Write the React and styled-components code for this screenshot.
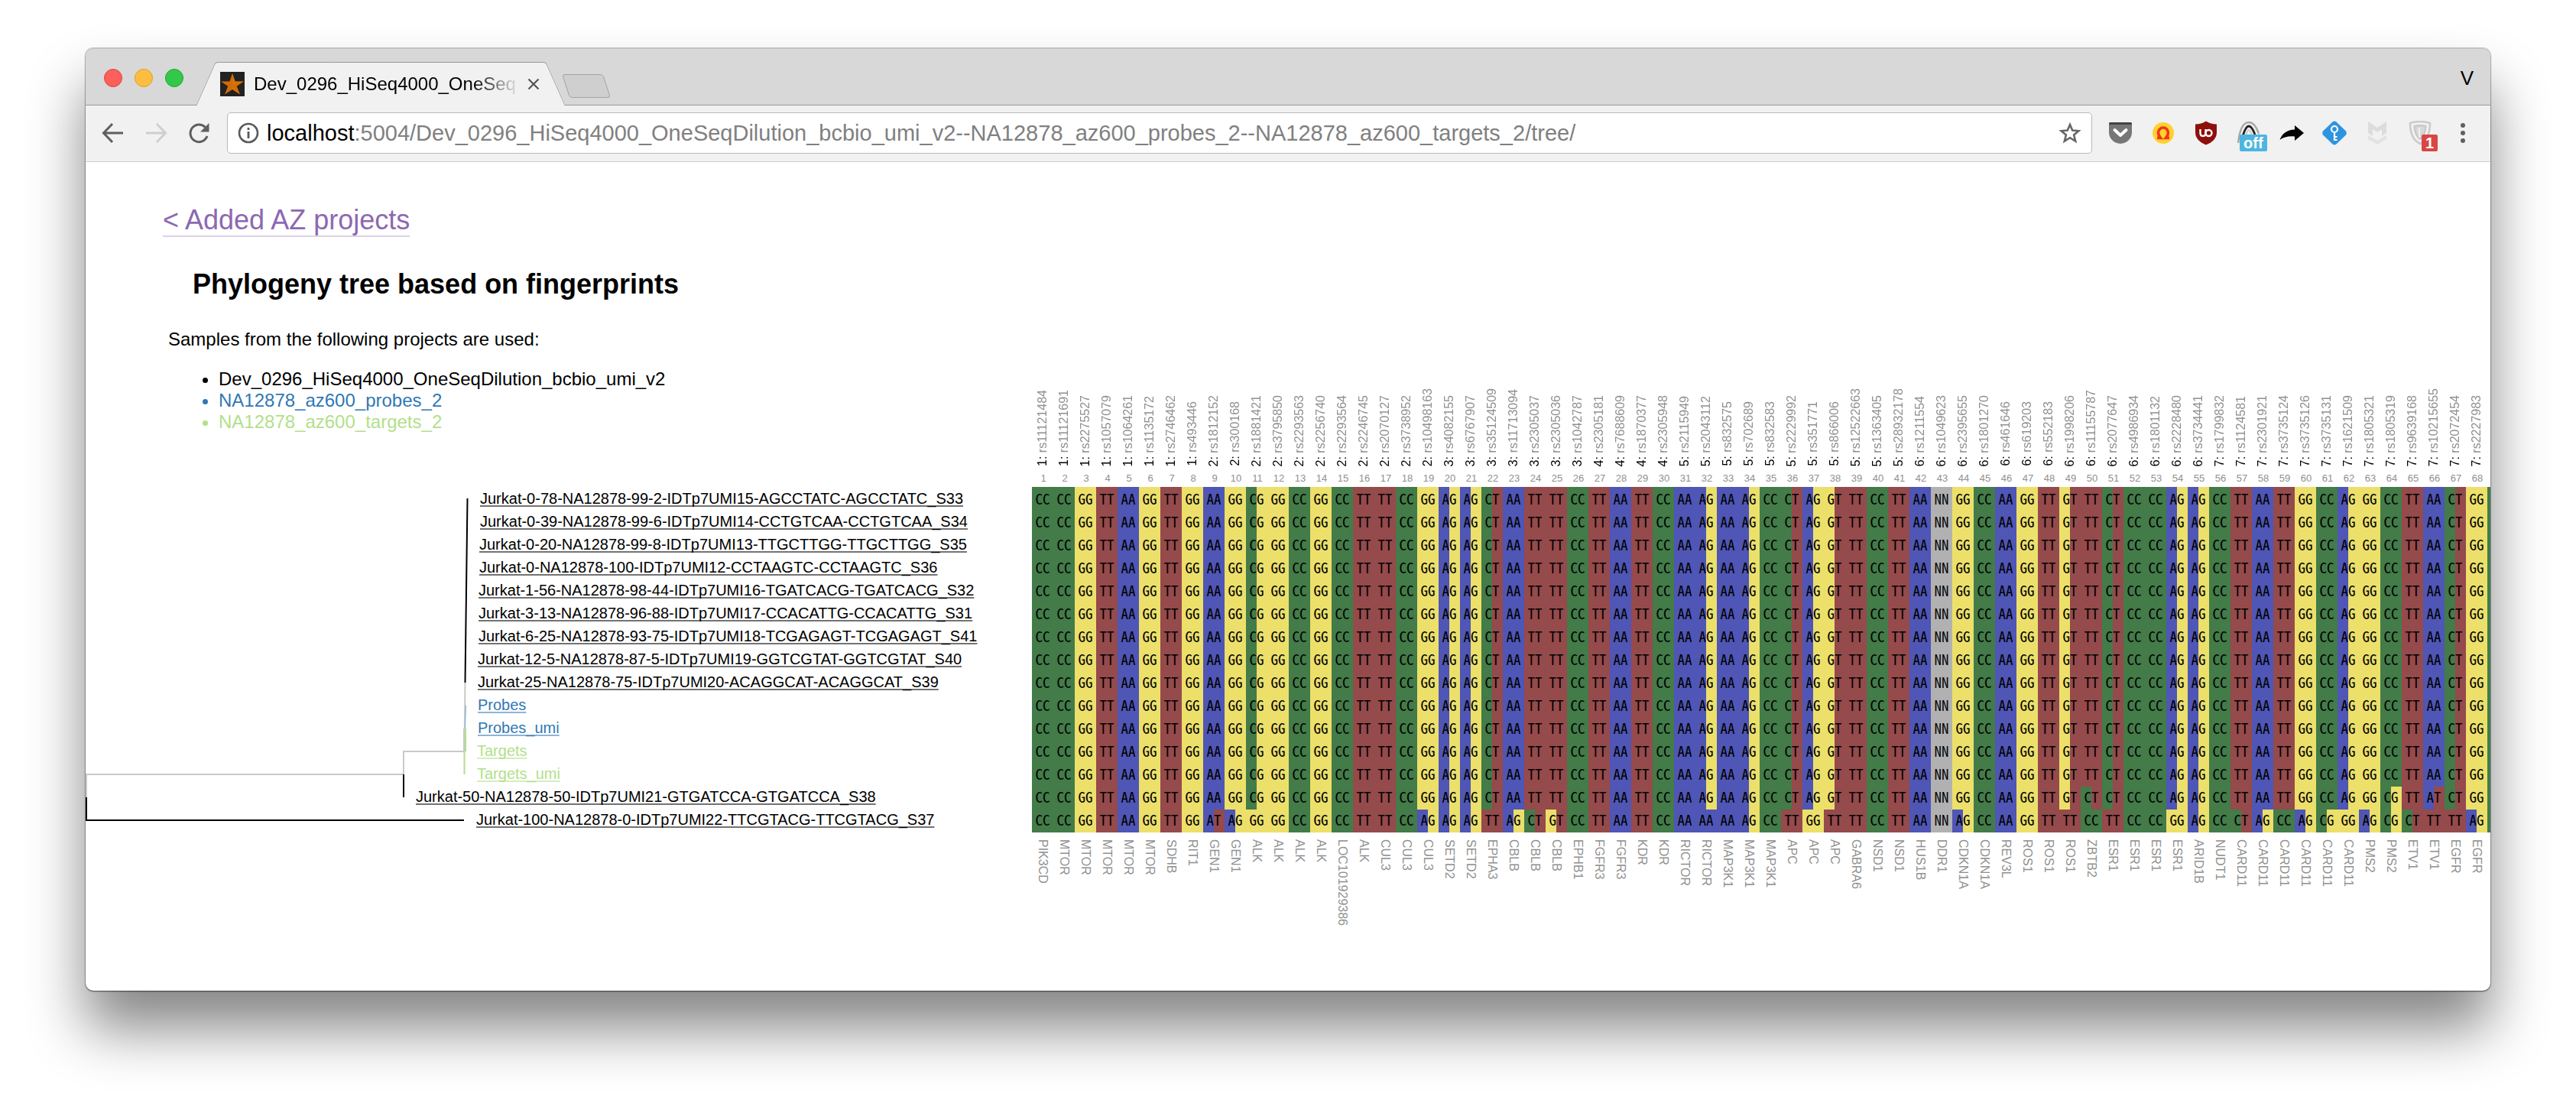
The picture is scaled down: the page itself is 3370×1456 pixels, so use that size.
import React from "react";
import styled, { createGlobalStyle, css } from "styled-components";

const BASE_COLORS = {
  A: "#4f56b5",
  C: "#437b49",
  G: "#ece06b",
  T: "#954a4c",
  N: "#b1b1b1",
};

const PROJECT_COLORS = {
  main: "#000000",
  probes: "#3078b4",
  targets: "#b2df8a",
};

const LOCI = [
  [1, "rs11121484", "PIK3CD"], [1, "rs11121691", "MTOR"], [1, "rs2275527", "MTOR"],
  [1, "rs1057079", "MTOR"], [1, "rs1064261", "MTOR"], [1, "rs1135172", "MTOR"],
  [1, "rs2746462", "SDHB"], [1, "rs493446", "RIT1"], [2, "rs1812152", "GEN1"],
  [2, "rs300168", "GEN1"], [2, "rs1881421", "ALK"], [2, "rs3795850", "ALK"],
  [2, "rs2293563", "ALK"], [2, "rs2256740", "ALK"], [2, "rs2293564", "LOC101929386"],
  [2, "rs2246745", "ALK"], [2, "rs2070127", "CUL3"], [2, "rs3738952", "CUL3"],
  [2, "rs10498163", "CUL3"], [3, "rs4082155", "SETD2"], [3, "rs6767907", "SETD2"],
  [3, "rs35124509", "EPHA3"], [3, "rs11713094", "CBLB"], [3, "rs2305037", "CBLB"],
  [3, "rs2305036", "CBLB"], [3, "rs1042787", "EPHB1"], [4, "rs2305181", "FGFR3"],
  [4, "rs7688609", "FGFR3"], [4, "rs1870377", "KDR"], [4, "rs2305948", "KDR"],
  [5, "rs2115949", "RICTOR"], [5, "rs2043112", "RICTOR"], [5, "rs832575", "MAP3K1"],
  [5, "rs702689", "MAP3K1"], [5, "rs832583", "MAP3K1"], [5, "rs2229992", "APC"],
  [5, "rs351771", "APC"], [5, "rs866006", "APC"], [5, "rs12522663", "GABRA6"],
  [5, "rs1363405", "NSD1"], [5, "rs28932178", "NSD1"], [6, "rs1211554", "HUS1B"],
  [6, "rs1049623", "DDR1"], [6, "rs2395655", "CDKN1A"], [6, "rs1801270", "CDKN1A"],
  [6, "rs461646", "REV3L"], [6, "rs619203", "ROS1"], [6, "rs552183", "ROS1"],
  [6, "rs1998206", "ROS1"], [6, "rs11155787", "ZBTB2"], [6, "rs2077647", "ESR1"],
  [6, "rs4986934", "ESR1"], [6, "rs1801132", "ESR1"], [6, "rs2228480", "ESR1"],
  [6, "rs3734441", "ARID1B"], [7, "rs1799832", "NUDT1"], [7, "rs1124581", "CARD11"],
  [7, "rs2301921", "CARD11"], [7, "rs3735124", "CARD11"], [7, "rs3735126", "CARD11"],
  [7, "rs3735131", "CARD11"], [7, "rs1621509", "CARD11"], [7, "rs1805321", "PMS2"],
  [7, "rs1805319", "PMS2"], [7, "rs9639168", "ETV1"], [7, "rs10215655", "ETV1"],
  [7, "rs2072454", "EGFR"], [7, "rs2227983", "EGFR"],
];

const COMMON =
  "CC CC GG TT AA GG TT GG AA GG CG GG CC GG CC TT TT CC GG AG AG CT AA TT TT CC TT AA TT CC AA AG AA AG CC CT AG GT TT CC TT AA NN GG CC AA GG TT GT TT CT CC CC AG AG CC TT AA TT GG CC AG GG CC TT AA CT GG".split(" ");

const JURKAT_50 = COMMON.map((g, i) => ({ 49: "CT", 63: "CG", 65: "AT" })[i] || g);

const JURKAT_100 =
  "CC CC GG TT AA GG TT GG AT AG GG GG CC GG CC TT TT CC AG AG AG TT AG CT GT CC TT AA TT CC AA AA AA AG CC TT GG TT TT CC TT AA NN AG CC AA GG TT TT CC TT CC CC GG AG CC CT AG CC AG CG GG AG CG CT TT TT AG".split(" ");

const SAMPLES = [
  { name: "Jurkat-0-78-NA12878-99-2-IDTp7UMI15-AGCCTATC-AGCCTATC_S33", project: "main", depth: 500 },
  { name: "Jurkat-0-39-NA12878-99-6-IDTp7UMI14-CCTGTCAA-CCTGTCAA_S34", project: "main", depth: 500 },
  { name: "Jurkat-0-20-NA12878-99-8-IDTp7UMI13-TTGCTTGG-TTGCTTGG_S35", project: "main", depth: 499 },
  { name: "Jurkat-0-NA12878-100-IDTp7UMI12-CCTAAGTC-CCTAAGTC_S36", project: "main", depth: 499 },
  { name: "Jurkat-1-56-NA12878-98-44-IDTp7UMI16-TGATCACG-TGATCACG_S32", project: "main", depth: 498 },
  { name: "Jurkat-3-13-NA12878-96-88-IDTp7UMI17-CCACATTG-CCACATTG_S31", project: "main", depth: 498 },
  { name: "Jurkat-6-25-NA12878-93-75-IDTp7UMI18-TCGAGAGT-TCGAGAGT_S41", project: "main", depth: 498 },
  { name: "Jurkat-12-5-NA12878-87-5-IDTp7UMI19-GGTCGTAT-GGTCGTAT_S40", project: "main", depth: 497 },
  { name: "Jurkat-25-NA12878-75-IDTp7UMI20-ACAGGCAT-ACAGGCAT_S39", project: "main", depth: 497 },
  { name: "Probes", project: "probes", depth: 497 },
  { name: "Probes_umi", project: "probes", depth: 497 },
  { name: "Targets", project: "targets", depth: 496 },
  { name: "Targets_umi", project: "targets", depth: 496 },
  { name: "Jurkat-50-NA12878-50-IDTp7UMI21-GTGATCCA-GTGATCCA_S38", project: "main", depth: 416, genotypes: JURKAT_50 },
  { name: "Jurkat-100-NA12878-0-IDTp7UMI22-TTCGTACG-TTCGTACG_S37", project: "main", depth: 495, genotypes: JURKAT_100 },
];

const LABEL_GAP = 16;

const GlobalStyle = createGlobalStyle`
  *, *::before, *::after { box-sizing: border-box; }
  body {
    margin: 0;
    background: #fff;
    color: #000;
    font-family: "Liberation Sans", Arial, Helvetica, sans-serif;
  }
  button { font: inherit; color: inherit; }
`;

const Desktop = styled.div`
  padding: 63px 112px 160px;
`;

const Window = styled.div`
  border-radius: 10px;
  background: #fff;
  box-shadow: 0 0 0 1px rgba(0, 0, 0, 0.18), 0 1px 2px rgba(0, 0, 0, 0.5), 0 50px 74px rgba(0, 0, 0, 0.48);
`;

/* ---------- tab strip ---------- */

const TabStrip = styled.header`
  display: flex;
  align-items: flex-end;
  height: 75px;
  padding: 3px 20px 0 24px;
  background: #d8d8d8;
  border-top: 1px solid #c2c2c2;
  border-bottom: 1px solid #989898;
  border-radius: 10px 10px 0 0;
`;

const WindowControls = styled.div`
  display: flex;
  align-self: center;
  gap: 16px;
  margin-right: 16px;
`;

const ControlDot = styled.button`
  width: 24px;
  height: 24px;
  padding: 0;
  border: 1px solid ${(p) => p.$edge};
  border-radius: 50%;
  background: ${(p) => p.$fill};
`;

const tabSide = css`
  content: "";
  position: absolute;
  z-index: 0;
  top: 0;
  bottom: 0;
  background: #f1f1f1;
  border-top: 1px solid #989898;
`;

const Tab = styled.div`
  position: relative;
  display: flex;
  align-items: center;
  width: 484px;
  height: 57px;
  margin-bottom: -1px;
  padding: 0 33px 0 32px;

  &::before {
    ${tabSide}
    left: 13px;
    right: 50%;
    border-left: 1px solid #989898;
    border-top-left-radius: 4px;
    transform: skewX(-24deg);
  }
  &::after {
    ${tabSide}
    left: 40%;
    right: 13px;
    border-right: 1px solid #989898;
    border-top-right-radius: 4px;
    transform: skewX(24deg);
  }
  > * {
    position: relative;
    z-index: 1;
  }
`;

const TabTitle = styled.span`
  flex: 1;
  min-width: 0;
  margin: 0 9px 0 12px;
  overflow: hidden;
  white-space: nowrap;
  font-size: 24px;
  line-height: 28px;
  mask-image: linear-gradient(to right, #000 calc(100% - 60px), transparent);
`;

const TabClose = styled.button`
  display: flex;
  width: 18px;
  height: 18px;
  padding: 0;
  border: 0;
  background: none;
`;

const NewTab = styled.button`
  width: 54px;
  height: 31px;
  margin-bottom: 9px;
  border: 1px solid #a3a3a3;
  border-radius: 4px;
  background: #cfcfcf;
  transform: skewX(18deg);
`;

const ProfileButton = styled.button`
  align-self: center;
  margin-left: auto;
  padding: 0 2px;
  border: 0;
  background: none;
  font-size: 26px;
  line-height: 28px;
`;

/* ---------- toolbar ---------- */

const Toolbar = styled.nav`
  display: flex;
  align-items: center;
  gap: 21px;
  padding: 9px 20px 10px;
  background: #f1f1f1;
  border-bottom: 1px solid #cfcfcf;
`;

const ButtonGroup = styled.div`
  display: flex;
  gap: 24px;
`;

const IconButton = styled.button`
  position: relative;
  display: flex;
  width: 32px;
  height: 32px;
  padding: 0;
  border: 0;
  background: none;

  svg {
    display: block;
    width: 32px;
    height: 32px;
  }
`;

const Badge = styled.span`
  position: absolute;
  top: 18px;
  left: ${(p) => p.$left}px;
  padding: 0 5px;
  border-radius: 2px;
  background: ${(p) => p.$color};
  color: #fff;
  font-size: 20px;
  font-weight: 700;
  line-height: 22px;
`;

const AddressBar = styled.div`
  display: flex;
  flex: 1;
  align-items: center;
  height: 54px;
  padding: 0 12px 0 11px;
  border: 1px solid #b9b9b9;
  border-radius: 5px;
  background: #fff;
`;

const UrlLabel = styled.label`
  display: flex;
  flex: 1;
  align-items: center;
  margin-left: 8px;
  font-size: 29px;
  line-height: 34px;
`;

const UrlInput = styled.input`
  flex: 1;
  min-width: 0;
  padding: 0;
  border: 0;
  outline: 0;
  background: none;
  color: #808080;
  font: inherit;
`;

/* ---------- page ---------- */

const Page = styled.main`
  display: flex;
  align-items: flex-start;
  overflow: hidden;
  padding-bottom: 44px;
  border-radius: 0 0 10px 10px;
`;

const TreeColumn = styled.section`
  flex: 0 0 1238px;
  padding-top: 56px;
`;

const BackLink = styled.a`
  display: inline-block;
  margin-left: 101px;
  border-bottom: 2px solid #ddd1e7;
  color: #8d68b2;
  font-size: 36px;
  line-height: 40px;
  text-decoration: none;
  vertical-align: top;
`;

const Title = styled.h1`
  margin: 42px 0 0 140px;
  font-size: 36px;
  line-height: 40px;
`;

const Intro = styled.p`
  margin: 38px 0 0 108px;
  font-size: 24px;
  line-height: 28px;
`;

const ProjectList = styled.ul`
  margin: 24px 0 0 108px;
  padding-left: 66px;
  font-size: 24px;
  line-height: 28px;
`;

const ProjectItem = styled.li`
  color: ${(p) => PROJECT_COLORS[p.$project]};
`;

const Tree = styled.div`
  position: relative;
  margin-top: 71px;
`;

const Branches = styled.svg`
  position: absolute;
  top: 0;
  left: 0;
  width: 520px;
  height: 450px;
`;

const SampleList = styled.ul`
  margin: 0;
  padding: 0;
  list-style: none;
`;

const SampleRow = styled.li`
  height: 30px;
  font-size: 20px;
  line-height: 30px;
  white-space: nowrap;
`;

const SampleLink = styled.a`
  color: ${(p) => PROJECT_COLORS[p.$project]};
  text-decoration: underline 2px;
  text-decoration-color: color-mix(in srgb, currentColor 55%, white);
  text-decoration-skip-ink: none;
  text-underline-offset: 2px;
`;

const Matrix = styled.table`
  flex: none;
  width: ${(LOCI.length + 1) * 28}px;
  margin-top: 268px;
  border-collapse: collapse;
  table-layout: fixed;

  th,
  td {
    padding: 0;
    font-weight: 400;
  }
`;

const LocusHead = styled.th`
  width: 28px;
  height: 130px;
  vertical-align: bottom;
`;

const VerticalText = styled.span`
  display: block;
  width: 28px;
  color: #909090;
  font-size: 16px;
  line-height: 28px;
  text-align: left;
  white-space: nowrap;
  writing-mode: vertical-rl;
  transform: ${(p) => (p.$up ? "rotate(180deg)" : "none")};
`;

const Chromosome = styled.span`
  color: #000;
`;

const LocusIndex = styled.th`
  height: 27px;
  color: #909090;
  font-size: 13px;
  line-height: 22px;
  text-align: center;
  && {
    padding: 5px 0 0 2px;
  }
`;

const Genotype = styled.td`
  height: 30px;
  background: linear-gradient(
    to right,
    ${(p) => BASE_COLORS[p.$pair[0]]} 50%,
    ${(p) => BASE_COLORS[p.$pair[1]]} 50%
  );
  font-family: "Noto Sans Mono CJK SC", "DejaVu Sans Mono", monospace;
  font-size: 19px;
  line-height: 26px;
  text-align: center;

  && {
    padding-bottom: 4px;
  }
  tr:first-child > && {
    height: 32px;
    padding-top: 2px;
  }
`;

const GeneCell = styled.td`
  height: 163px;
  vertical-align: top;
  && {
    padding-top: 9px;
  }
`;

/* ---------- icons ---------- */

const Favicon = () => (
  <svg width="32" height="32" viewBox="0 0 32 32">
    <rect width="32" height="32" fill="#222" />
    <path d="M16 2 L19.6 12.6 L31 12.6 L21.8 18.8 L26 29.6 L16 23 L6 29.6 L10.2 18.8 L1 12.6 L12.4 12.6 Z" fill="#d26b05" />
    <path d="M16 2 L16 18 L31 12.6 L19.6 12.6 Z M16 18 L26 29.6 L16 23 Z" fill="#e07a0c" opacity=".5" />
  </svg>
);

const CloseIcon = () => (
  <svg width="18" height="18" viewBox="0 0 18 18" stroke="#555" strokeWidth="2.2">
    <path d="M2.5 2.5 L15.5 15.5 M15.5 2.5 L2.5 15.5" />
  </svg>
);

const ArrowIcon = ({ color, flip }) => (
  <svg viewBox="0 0 32 32" fill="none" stroke={color} strokeWidth="3">
    <path d={flip ? "M3 16 H28 M17 4 L28.5 16 L17 28" : "M29 16 H4 M15 4 L3.5 16 L15 28"} />
  </svg>
);

const ReloadIcon = () => (
  <svg viewBox="0 0 32 32" fill="none" stroke="#5f5f5f" strokeWidth="3">
    <path d="M27 20 A11.3 11.3 0 1 1 24.5 8.5" />
    <path d="M29.5 3 V14.5 H18 Z" fill="#5f5f5f" stroke="none" />
  </svg>
);

const InfoIcon = () => (
  <svg width="32" height="32" viewBox="0 0 32 32">
    <circle cx="16" cy="16" r="12" fill="none" stroke="#5a5a5a" strokeWidth="2.6" />
    <path d="M16 14 V23 M16 9 V12" stroke="#5a5a5a" strokeWidth="2.8" />
  </svg>
);

const StarIcon = () => (
  <svg viewBox="0 0 32 32" fill="none" stroke="#666" strokeWidth="2.6">
    <path d="M16 5 L19.2 12.6 L27.4 13.2 L21.1 18.5 L23.2 26.6 L16 22.2 L8.8 26.6 L10.9 18.5 L4.6 13.2 L12.8 12.6 Z" />
  </svg>
);

const PocketIcon = () => (
  <svg viewBox="0 0 32 32">
    <path d="M1 4 Q1 2 3 2 H29 Q31 2 31 4 V15 A15 15 0 0 1 1 15 Z" fill="#777" />
    <path d="M1 4 Q1 2 3 2 H29 Q31 2 31 4 V5 H1 Z" fill="#444" />
    <path d="M8.5 12 L16 19 L23.5 12" fill="none" stroke="#fff" strokeWidth="4" strokeLinecap="round" strokeLinejoin="round" />
  </svg>
);

const HorseshoeIcon = () => (
  <svg viewBox="0 0 32 32">
    <circle cx="16" cy="16" r="14" fill="#fdd22f" />
    <path d="M8 22.5 H12.5 Q9.500 19 9.500 15.500 A6.500 6.500 0 0 1 22.500 15.500 Q22.500 19 19.500 22.500 H24" fill="none" stroke="#f5321b" strokeWidth="3.600" />
  </svg>
);

const ShieldIcon = () => (
  <svg viewBox="0 0 32 32">
    <path d="M16 0.500 Q22 4.500 30 4.500 V15 Q30 26 16 31.500 Q2 26 2 15 V4.500 Q10 4.500 16 0.500 Z" fill="#8e0f0b" />
    <path d="M8.500 11 V16 Q8.500 20 12 20 Q15.500 20 15.500 16 V11" fill="none" stroke="#fff" strokeWidth="2.400" />
    <circle cx="19.500" cy="16" r="4" fill="none" stroke="#fff" strokeWidth="2.400" />
  </svg>
);

const ArchIcon = () => (
  <svg viewBox="0 0 32 32" fill="none">
    <path d="M2 29 Q5 2 16 2 Q24 2 29 17" stroke="#a9a9a9" strokeWidth="2.4" />
    <path d="M8 20 Q12 7 16 7 Q20 7 24 18" stroke="#222" strokeWidth="2.8" />
    <path d="M12 20 Q14 12 16 12 Q18 12 20 20" stroke="#c9c9c9" strokeWidth="2" />
  </svg>
);

const ShareIcon = () => (
  <svg viewBox="0 0 32 32">
    <path d="M20 6 L32 16 L20 26 V20.500 Q8 19.500 0.500 25 Q5 12 20 11.500 Z" fill="#000" />
  </svg>
);

const KeyIcon = () => (
  <svg viewBox="0 0 32 32">
    <path d="M13.500 1.500 Q16 -0.500 18.500 1.500 L31 13.500 Q32.500 16 31 18.500 L18.500 30.500 Q16 32.500 13.500 30.500 L1 18.500 Q-0.500 16 1 13.500 Z" fill="#2e94df" />
    <g fill="none" stroke="#fff" strokeWidth="2.200">
      <circle cx="16" cy="11" r="4" />
      <path d="M16 15 V26 M16 21 H19.500 M16 25 H19.500" />
    </g>
  </svg>
);

const ChevronShieldIcon = () => (
  <svg viewBox="0 0 32 32" fill="#dcdcdc">
    <path d="M4 1 L16 9 L28 1 V16 L22 20 V11 L16 15 L10 11 V20 L4 16 Z" />
    <path d="M4 19 L16 26 L28 19 V24 L16 31 L4 24 Z" fill="#e2e2e2" />
  </svg>
);

const GuardIcon = () => (
  <svg viewBox="0 0 32 32" fill="none">
    <path d="M3 3 Q16 -1 29 3 Q29 24 16 30 Q3 24 3 3 Z" stroke="#cbcbcb" strokeWidth="2.600" />
    <path d="M8.500 7 Q16 5 23.500 7 Q23 19 16 24 Q9 19 8.500 7 Z" fill="#d8d8d8" stroke="#c6c6c6" strokeWidth="2" />
    <path d="M15 9 V22" stroke="#f1f1f1" strokeWidth="2" />
  </svg>
);

const MenuIcon = () => (
  <svg viewBox="0 0 32 32" fill="#5f5f5f">
    <circle cx="16" cy="6" r="3" />
    <circle cx="16" cy="16" r="3" />
    <circle cx="16" cy="26" r="3" />
  </svg>
);

/* ---------- sections ---------- */

function BrowserTabs() {
  return (
    <TabStrip>
      <WindowControls>
        <ControlDot type="button" aria-label="Close" $fill="#fc605b" $edge="#e0443e" />
        <ControlDot type="button" aria-label="Minimise" $fill="#fdbd41" $edge="#dfa023" />
        <ControlDot type="button" aria-label="Zoom" $fill="#34c84a" $edge="#1aab29" />
      </WindowControls>
      <Tab>
        <Favicon />
        <TabTitle>Dev_0296_HiSeq4000_OneSeq</TabTitle>
        <TabClose type="button" aria-label="Close tab">
          <CloseIcon />
        </TabClose>
      </Tab>
      <NewTab type="button" aria-label="New tab" />
      <ProfileButton type="button">V</ProfileButton>
    </TabStrip>
  );
}

function BrowserToolbar() {
  return (
    <Toolbar>
      <ButtonGroup>
        <IconButton type="button" aria-label="Back"><ArrowIcon color="#5f5f5f" /></IconButton>
        <IconButton type="button" aria-label="Forward"><ArrowIcon color="#cfcfcf" flip /></IconButton>
        <IconButton type="button" aria-label="Reload"><ReloadIcon /></IconButton>
      </ButtonGroup>
      <AddressBar>
        <InfoIcon />
        <UrlLabel>
          localhost
          <UrlInput
            type="text"
            defaultValue=":5004/Dev_0296_HiSeq4000_OneSeqDilution_bcbio_umi_v2--NA12878_az600_probes_2--NA12878_az600_targets_2/tree/"
          />
        </UrlLabel>
        <IconButton type="button" aria-label="Bookmark"><StarIcon /></IconButton>
      </AddressBar>
      <ButtonGroup>
        <IconButton type="button" aria-label="Pocket"><PocketIcon /></IconButton>
        <IconButton type="button" aria-label="Horseshoe"><HorseshoeIcon /></IconButton>
        <IconButton type="button" aria-label="Blocker"><ShieldIcon /></IconButton>
        <IconButton type="button">
          <ArchIcon />
          <Badge $left={4} $color="#4db5e2">off</Badge>
        </IconButton>
        <IconButton type="button" aria-label="Share"><ShareIcon /></IconButton>
        <IconButton type="button" aria-label="Passwords"><KeyIcon /></IconButton>
        <IconButton type="button" aria-label="Adviser"><ChevronShieldIcon /></IconButton>
        <IconButton type="button">
          <GuardIcon />
          <Badge $left={18} $color="#d84744">1</Badge>
        </IconButton>
        <IconButton type="button" aria-label="Menu"><MenuIcon /></IconButton>
      </ButtonGroup>
    </Toolbar>
  );
}

function PhylogenyTree() {
  return (
    <Tree>
      <Branches viewBox="0 0 520 450" fill="none" strokeWidth="2" aria-hidden="true">
        <path d="M499.500 15 L496.500 256" stroke="#000" />
        <path d="M496.500 256 L495.500 346" stroke="#c9c9c9" />
        <path d="M497.500 286 L496.500 316" stroke="#7fb0d6" strokeWidth="1" />
        <path d="M497 316 V346 M495.500 346 V376" stroke="#b2df8a" />
        <path d="M495 316 V346 H416 V376 H1 V406" stroke="#c9c9c9" />
        <path d="M416 376 V406 M1 406 V436 H495" stroke="#000" />
      </Branches>
      <SampleList>
        {SAMPLES.map((s) => (
          <SampleRow key={s.name} style={{ paddingLeft: s.depth + LABEL_GAP }}>
            <SampleLink href="#" $project={s.project}>{s.name}</SampleLink>
          </SampleRow>
        ))}
      </SampleList>
    </Tree>
  );
}

function FingerprintMatrix() {
  return (
    <Matrix>
      <thead>
        <tr>
          {LOCI.map(([chrom, snp]) => (
            <LocusHead key={snp} scope="col">
              <VerticalText $up>
                <Chromosome>{chrom}:</Chromosome> {snp}
              </VerticalText>
            </LocusHead>
          ))}
          <LocusHead as="td" />
        </tr>
        <tr>
          {LOCI.map(([, snp], i) => (
            <LocusIndex key={snp}>{i + 1}</LocusIndex>
          ))}
        </tr>
      </thead>
      <tbody>
        {SAMPLES.map((s) => (
          <tr key={s.name}>
            {(s.genotypes || COMMON).map((pair, i) => (
              <Genotype key={i} $pair={pair}>{pair}</Genotype>
            ))}
            <Genotype $pair="CC" />
          </tr>
        ))}
      </tbody>
      <tfoot>
        <tr>
          {LOCI.map(([, snp, gene]) => (
            <GeneCell key={snp}>
              <VerticalText>{gene}</VerticalText>
            </GeneCell>
          ))}
        </tr>
      </tfoot>
    </Matrix>
  );
}

export default function App() {
  return (
    <>
      <GlobalStyle />
      <Desktop>
        <Window>
          <BrowserTabs />
          <BrowserToolbar />
          <Page>
            <TreeColumn>
              <BackLink href="#">&lt; Added AZ projects</BackLink>
              <Title>Phylogeny tree based on fingerprints</Title>
              <Intro>Samples from the following projects are used:</Intro>
              <ProjectList>
                <ProjectItem $project="main">Dev_0296_HiSeq4000_OneSeqDilution_bcbio_umi_v2</ProjectItem>
                <ProjectItem $project="probes">NA12878_az600_probes_2</ProjectItem>
                <ProjectItem $project="targets">NA12878_az600_targets_2</ProjectItem>
              </ProjectList>
              <PhylogenyTree />
            </TreeColumn>
            <FingerprintMatrix />
          </Page>
        </Window>
      </Desktop>
    </>
  );
}
